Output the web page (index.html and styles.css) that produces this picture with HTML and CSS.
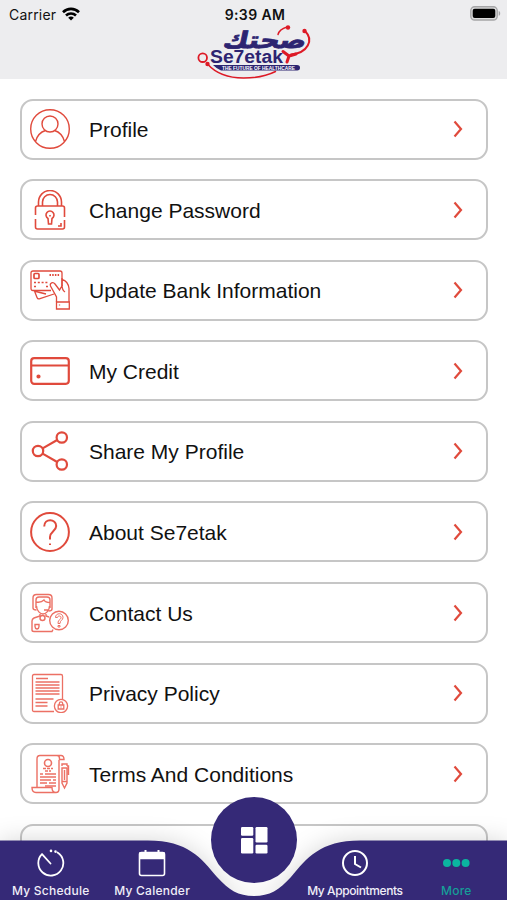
FILE: index.html
```
<!DOCTYPE html>
<html lang="en">
<head>
  <meta charset="UTF-8">
  <meta name="viewport" content="width=device-width, initial-scale=1.0">
  <title>Se7etak</title>
  <link rel="stylesheet" href="styles.css">
</head>
<body>
  <header class="header">
    <div class="status-bar">
      <div class="carrier">
        <span>Carrier</span>
        <svg width="18" height="14" viewBox="0 0 18 14" fill="none" stroke="#000" stroke-width="2.6">
          <path d="M1 5.2C5.5.8 12.5.8 17 5.2M4 8.5c2.8-2.7 7.2-2.7 10 0"/>
          <path d="M6.2 10.7c1.6-1.5 4-1.5 5.6 0L9 13.6z" fill="#000" stroke="none"/>
        </svg>
      </div>
      <span class="time">9:39 AM</span>
      <svg class="battery" width="31" height="15" viewBox="0 0 31 15">
        <rect x=".8" y=".8" width="26.4" height="13.2" rx="3.8" fill="#dcdcdd" stroke="#a5a5a7" stroke-width="1.4"/>
        <rect x="2.7" y="2.7" width="22.6" height="9.4" rx="2" fill="#000"/>
        <path d="M28.7 5c2 .6 2 4.200 0 4.800z" fill="#a5a5a7"/>
      </svg>
    </div>
    <svg class="logo" width="120" height="54" viewBox="0 0 120 54">
      <g fill="none" stroke="#dd1a26" stroke-linecap="round">
        <circle cx="8.700" cy="32.700" r="4.300" stroke-width="1.800"/>
        <path d="M13.500 39c8 9 20 14 36 14 13 0 24-2.500 32-6.500" stroke-width="1.500"/>
        <path d="M84 9.500c1-4 4-6 9-7.500" stroke-width="1.500"/>
        <path d="M111 6c9 9 3 22-14 23.500" stroke-width="2"/>
        <path d="M89 26.500l6 4.500 7-2M95 31l-2 6" stroke-width="3"/>
      </g>
      <g fill="#dd1a26">
        <circle cx="94" cy="2.500" r="2.200"/>
        <circle cx="110.500" cy="6" r="2.200"/>
        <circle cx="13.500" cy="39" r="2.200"/>
      </g>
      <text class="logo-arabic" transform="translate(28 22.500) skewX(-12)" textLength="83" lengthAdjust="spacingAndGlyphs">صحتك</text>
      <text class="logo-name" x="16" y="37.500" textLength="73" lengthAdjust="spacingAndGlyphs">Se7etak</text>
      <path d="M19 40H103q3 0 3 2.800t-3 2.700H27q-4-1.500-8-5.500z" fill="#2c2471"/>
      <text class="logo-tagline" x="28" y="44.500" textLength="73" lengthAdjust="spacingAndGlyphs">THE FUTURE OF HEALTHCARE</text>
    </svg>
  </header>

  <main class="menu">
    <a class="menu-item">
      <svg class="icon" viewBox="0 0 40 40" stroke-width="1.400">
        <circle cx="20" cy="20" r="19.300"/>
        <circle cx="20" cy="15" r="8"/>
        <path d="M5.500 32.500C7 27 10.500 23 15.500 21.500M34.500 32.500C33 27 29.500 23 24.500 21.500"/>
      </svg>
      <span>Profile</span>
      <svg class="arrow" viewBox="0 0 10 18"><path d="M1.500 1.500L8 9l-6.500 7.500"/></svg>
    </a>
    <a class="menu-item">
      <svg class="icon" viewBox="0 0 40 40" stroke-width="1.600">
        <path d="M5.500 25v-7q0-2 2-2h25q2 0 2 2v9M34.500 30v7q0 2-2 2h-25q-2 0-2-2v-8M31 33v3h-3"/>
        <path d="M8.500 16v-4a11.500 11.500 0 0 1 23 0v4M12.500 16v-4a7.500 7.500 0 0 1 15 0v4"/>
        <path d="M18 28.500a4 4 0 1 1 4 0l-.5 5.500h-3z"/>
        <path d="M20 25v1.500"/>
      </svg>
      <span>Change Password</span>
      <svg class="arrow" viewBox="0 0 10 18"><path d="M1.500 1.500L8 9l-6.500 7.500"/></svg>
    </a>
    <a class="menu-item">
      <svg class="icon" viewBox="0 0 40 40" stroke-width="1.300">
        <path d="M21 20.500H3q-2 0-2-2V3q0-2 2-2h27q2 0 2 2v13"/>
        <rect x="4" y="3.500" width="5" height="5" rx="1" stroke-width="1.700"/>
        <path d="M19.500 5h10" stroke-dasharray="1.500 1.200" stroke-width="1.800"/>
        <path d="M4 12.500h15M4 16.500h2M16 16.500h2" stroke-dasharray="2 1.800" stroke-width="1.600"/>
        <path d="M4.500 21l2.500 6.500q.8 2 3 1.200L24 24M4 21l12 3"/>
        <path d="M26.500 32v-5l-6-11c-1-3 2.500-4.500 4.500-2l4.500 6 3-5M32 9.500c4 1 6.500 5 7 9V32M32 8v7q0 5 3 7"/>
        <path d="M26.500 32h12.800v7H26.500zM29.500 34.500v1"/>
      </svg>
      <span>Update Bank Information</span>
      <svg class="arrow" viewBox="0 0 10 18"><path d="M1.500 1.500L8 9l-6.500 7.500"/></svg>
    </a>
    <a class="menu-item">
      <svg class="icon" viewBox="0 0 40 40" stroke-width="2.200">
        <rect x="1.200" y="7.200" width="37.600" height="25.600" rx="3"/>
        <path d="M1 14.500h38"/>
        <circle cx="8.500" cy="25.500" r="1" />
      </svg>
      <span>My Credit</span>
      <svg class="arrow" viewBox="0 0 10 18"><path d="M1.500 1.500L8 9l-6.500 7.500"/></svg>
    </a>
    <a class="menu-item">
      <svg class="icon" viewBox="0 0 40 40" stroke-width="2.200">
        <circle cx="8" cy="20" r="5.200"/>
        <circle cx="31.800" cy="6.500" r="5.200"/>
        <circle cx="31.800" cy="33.500" r="5.200"/>
        <path d="M12.600 17.400L27.200 9M12.600 22.600L27.200 31"/>
      </svg>
      <span>Share My Profile</span>
      <svg class="arrow" viewBox="0 0 10 18"><path d="M1.500 1.500L8 9l-6.500 7.500"/></svg>
    </a>
    <a class="menu-item">
      <svg class="icon" viewBox="0 0 40 40" stroke-width="2">
        <circle cx="20" cy="20" r="18.900"/>
        <path d="M14.200 14.500c0-8.500 12-8 12-.5 0 5-6.200 5.500-6.200 11v2.500M20 31.500v1.500"/>
      </svg>
      <span>About Se7etak</span>
      <svg class="arrow" viewBox="0 0 10 18"><path d="M1.500 1.500L8 9l-6.500 7.500"/></svg>
    </a>
    <a class="menu-item">
      <svg class="icon thin" viewBox="0 0 40 40" stroke-width="1.400">
        <path d="M3 15V5q0-3.500 3.500-3.500h12Q22 1.500 22 5v11q0 2-3.500 2M3 15q0 2 3.500 2"/>
        <path d="M6 15V7q0-3 3-3h8q3 0 3 3v8M6 9c5 1 7-1 8-2 1 2 3 2.500 6 2.500"/>
        <path d="M6.500 13c0 5 4 8 6.500 8s6.500-3 6.500-8M14 17h5"/>
        <path d="M10 21v2l-6 2q-2 1-2 3v9q0 1.500 2 1.500h18l1-2M16 21v2l3 1"/>
        <circle cx="12.500" cy="25" r="2.500"/>
        <path d="M5 31.500h4v2q0 2-2 2.500-2-.5-2-2.500z"/>
        <circle cx="29" cy="27.500" r="9.300"/>
        <path d="M25.500 24.500c0-5 7.500-5 7.500 0 0 3-3 2.500-3 6h-2c0-4.500 3-3.500 3-6 0-2-3.500-2-3.500 0zM28 32.500h2v1.500h-2z" stroke-width="1"/>
      </svg>
      <span>Contact Us</span>
      <svg class="arrow" viewBox="0 0 10 18"><path d="M1.500 1.500L8 9l-6.500 7.500"/></svg>
    </a>
    <a class="menu-item">
      <svg class="icon thin" viewBox="0 0 40 40" stroke-width="1.300">
        <path d="M24 38.500H4q-1.500 0-1.500-1.500V3Q2.500 1.500 4 1.500h27q1.500 0 1.500 1.500v23"/>
        <path d="M6 5.500h12M5.500 9h24M5.500 12h24M5.500 15h24M5.500 18h24M5.500 21h24M5.500 26h18M5.500 29.500h12M5.500 33h12"/>
        <circle cx="31" cy="33" r="6.600"/>
        <path d="M28.200 32h5.600v4h-5.600zM29.300 32v-1.500a1.700 1.700 0 0 1 3.400 0V32M31 33.500v1"/>
      </svg>
      <span>Privacy Policy</span>
      <svg class="arrow" viewBox="0 0 10 18"><path d="M1.500 1.500L8 9l-6.500 7.500"/></svg>
    </a>
    <a class="menu-item">
      <svg class="icon thin" viewBox="0 0 40 40" stroke-width="1.400">
        <path d="M7 33.500V5q0-3.500 3-3.500h21q3 0 3 4h-4.500v-1q0-3-2.500-3M29 6v29q0 3.500-3 3.500H6q-4 0-4-5h20q0 5 4 5"/>
        <circle cx="18" cy="9" r="3.500" stroke-width="1.600"/>
        <path d="M13 14.500h10M15 17h6" stroke-dasharray="3 1"/>
        <path d="M10 20h3M15 20h11M10 23h16M10 26h11M23 26h3M10 29h7M19 29h7M15 32h11" />
        <path d="M32 14v15l2.500 5 2.500-5V14zM32 12v-2h5v2M37 12h1.500v9M32 27.500h5M34.500 16v10"/>
      </svg>
      <span>Terms And Conditions</span>
      <svg class="arrow" viewBox="0 0 10 18"><path d="M1.500 1.500L8 9l-6.500 7.500"/></svg>
    </a>
    <a class="menu-item last"></a>
  </main>

  <nav class="tab-bar">
    <svg class="tab-shape" width="507" height="60" viewBox="0 0 507 60">
      <path d="M0 .5H148C188 .5 201 18 217 37C229 50 238 56 254 56S279 50 291 37C307 18 320 .5 360 .5H507V60H0z" fill="#352977"/>
    </svg>
    <a class="home">
      <svg width="27" height="27" viewBox="0 0 27 27" fill="#fff">
        <rect x="0" y="0" width="12.300" height="8.800" rx="1.200"/>
        <rect x="0" y="11" width="12.300" height="15.500" rx="1.200"/>
        <rect x="14.500" y="0" width="12" height="15.500" rx="1.200"/>
        <rect x="14.500" y="17.700" width="12" height="8.800" rx="1.200"/>
      </svg>
    </a>
    <div class="tabs">
      <a class="tab">
        <svg width="28" height="28" viewBox="0 0 28 28" fill="none" stroke="#fff" stroke-width="1.800" stroke-linecap="round">
          <path d="M20.500 3.500A12.500 12.500 0 1 1 5 5.200M5 5.200l8.500 9.300"/>
          <path d="M14 1.800v.1M18.500 2.500v.1" stroke-width="2.600"/>
        </svg>
        <span>My Schedule</span>
      </a>
      <a class="tab">
        <svg width="28" height="28" viewBox="0 0 28 28" fill="none" stroke="#fff" stroke-width="1.600">
          <rect x="1.500" y="3.500" width="25" height="23" rx="2"/>
          <path d="M2 4h24v5.500H2z" fill="#fff"/>
          <path d="M7.500 1v3M20.500 1v3" stroke-width="2"/>
        </svg>
        <span>My Calender</span>
      </a>
      <a class="tab"></a>
      <a class="tab appointments">
        <svg width="28" height="28" viewBox="0 0 28 28" fill="none" stroke="#fff" stroke-width="2">
          <circle cx="14" cy="14" r="12"/>
          <path d="M14 7v8l6 3.500"/>
        </svg>
        <span>My Appointments</span>
      </a>
      <a class="tab active">
        <svg width="28" height="28" viewBox="0 0 28 28" fill="#0bb5a0">
          <circle cx="5" cy="14" r="4"/>
          <circle cx="14.300" cy="14" r="4"/>
          <circle cx="23.600" cy="14" r="4"/>
        </svg>
        <span>More</span>
      </a>
    </div>
  </nav>
</body>
</html>
```

FILE: styles.css
```
* {
  box-sizing: border-box;
}
body {
  position: relative;
  height: 900px;
  margin: 0;
  overflow: hidden;
  background-color: #fff;
  font-family: "Liberation Sans", Arial, sans-serif;
  color: #111;
}
.header {
  display: flex;
  flex-direction: column;
  align-items: center;
  height: 79px;
  background-color: #ededef;
}
.status-bar {
  display: grid;
  grid-template-columns: 1fr auto 1fr;
  align-items: center;
  width: 100%;
  height: 25px;
  padding: 3px 6px 0 9px;
  font-family: Inter, sans-serif;
  font-size: 14px;
}
.carrier {
  display: flex;
  align-items: center;
  gap: 6px;
  letter-spacing: 0.2px;
}
.time {
  font-weight: 600;
  letter-spacing: 0.4px;
}
.battery {
  justify-self: end;
  margin-bottom: 1px;
}
.logo {
  flex-shrink: 0;
  overflow: visible;
}
.logo-arabic {
  font: bold 23px "DejaVu Sans", sans-serif;
  fill: #2c2471;
  stroke: #2c2471;
  stroke-width: 0.8;
}
.logo-name {
  font: bold 18px "Liberation Sans", sans-serif;
  fill: #2c2471;
}
.logo-tagline {
  font: bold 4.5px "Liberation Sans", sans-serif;
  fill: #fff;
}
.menu {
  display: flex;
  flex-direction: column;
  gap: 19.6px;
  padding: 19.5px 19px 0 20px;
}
.menu-item {
  display: flex;
  flex-shrink: 0;
  align-items: center;
  height: 61px;
  padding: 0 23px 0 8px;
  border: 2px solid #c6c6c6;
  border-radius: 13px;
  font-size: 21px;
}
.menu-item span {
  flex: 1;
  padding-top: 2px;
  margin-left: 19px;
}
.last {
  height: 90px;
}
.icon {
  width: 40px;
  height: 40px;
  fill: none;
  stroke: #e04a3c;
}
.thin {
  stroke: #ec7064;
}
.arrow {
  width: 10px;
  height: 18px;
  fill: none;
  stroke: #e04a3c;
  stroke-width: 2.2;
}
.tab-bar {
  position: absolute;
  left: 0;
  bottom: 0;
  width: 100%;
  height: 60px;
}
.tab-shape {
  position: absolute;
  overflow: visible;
  filter: drop-shadow(0 0 12px rgba(0, 0, 0, 0.16));
}
.home {
  position: absolute;
  z-index: 1;
  left: 211px;
  top: -43px;
  display: flex;
  align-items: center;
  justify-content: center;
  width: 86px;
  height: 86px;
  border-radius: 50%;
  background-color: #352977;
}
.tabs {
  position: relative;
  display: grid;
  grid-template-columns: repeat(5, 1fr);
  height: 100%;
}
.tab {
  display: flex;
  flex-direction: column;
  align-items: center;
  gap: 6px;
  padding-top: 9px;
  color: #f0eef8;
  font: 500 12px/15px Inter, sans-serif;
  letter-spacing: 0.25px;
  white-space: nowrap;
}
.appointments {
  letter-spacing: -0.4px;
}
.active {
  color: #159e97;
}
```
